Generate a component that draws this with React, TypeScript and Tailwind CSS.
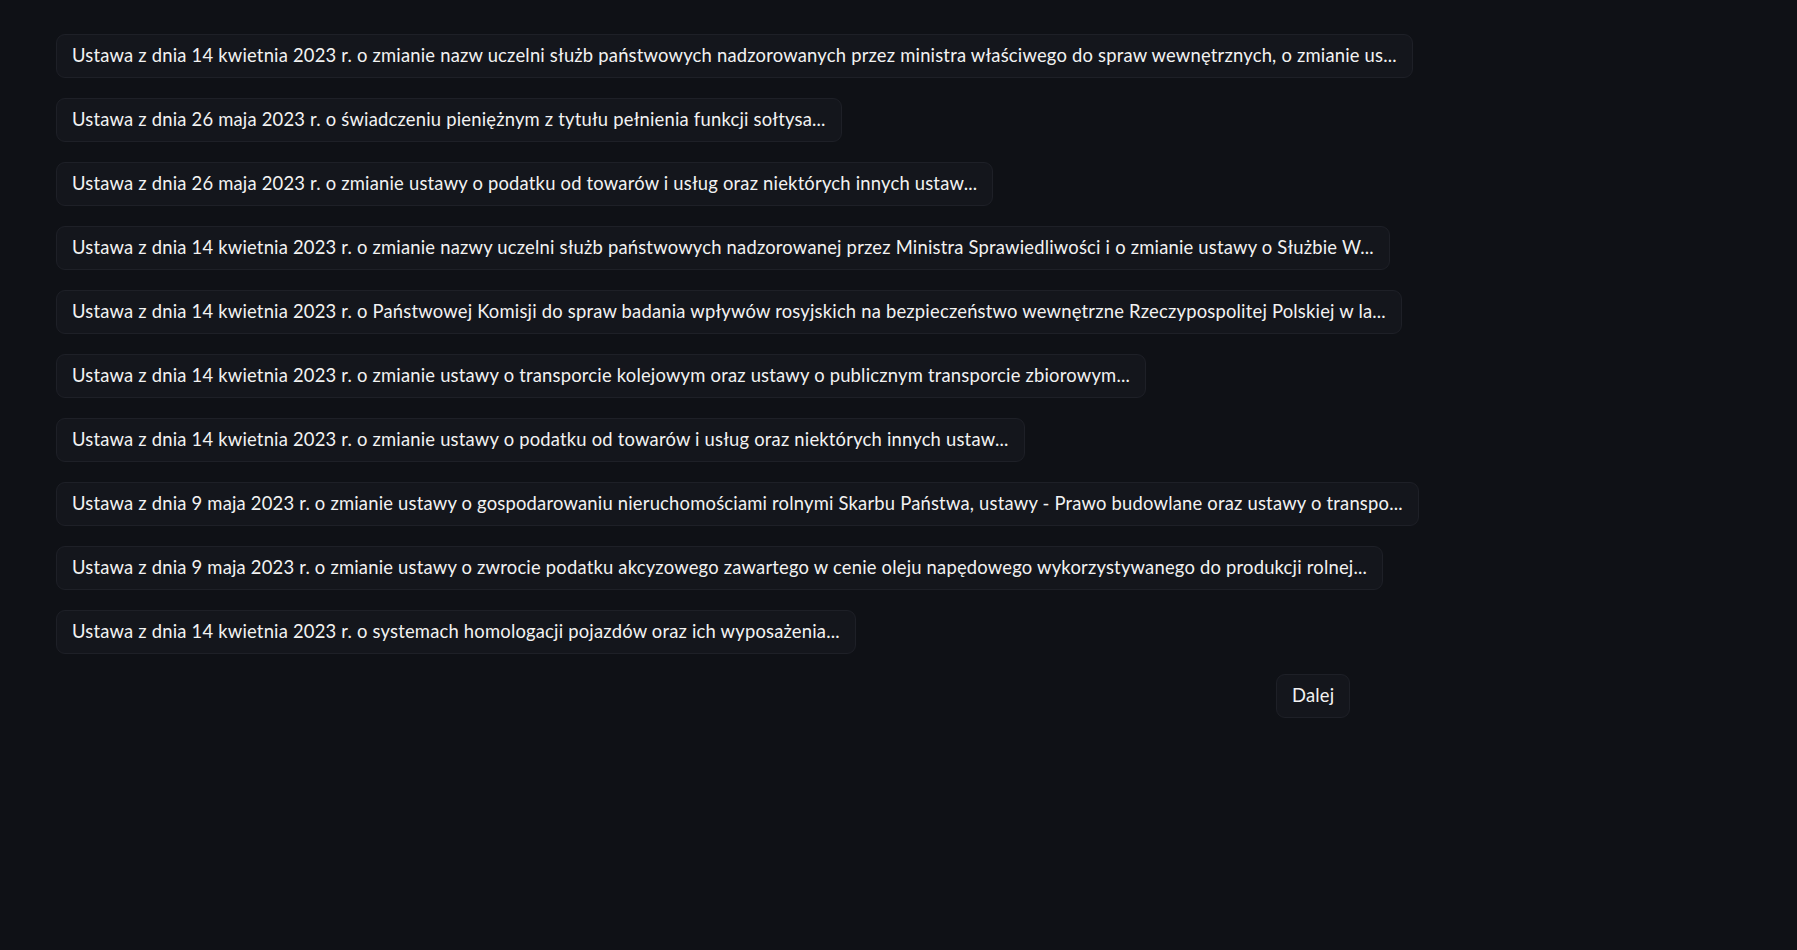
const items = [
  "Ustawa z dnia 14 kwietnia 2023 r. o zmianie nazw uczelni służb państwowych nadzorowanych przez ministra właściwego do spraw wewnętrznych, o zmianie us...",
  "Ustawa z dnia 26 maja 2023 r. o świadczeniu pieniężnym z tytułu pełnienia funkcji sołtysa...",
  "Ustawa z dnia 26 maja 2023 r. o zmianie ustawy o podatku od towarów i usług oraz niektórych innych ustaw...",
  "Ustawa z dnia 14 kwietnia 2023 r. o zmianie nazwy uczelni służb państwowych nadzorowanej przez Ministra Sprawiedliwości i o zmianie ustawy o Służbie W...",
  "Ustawa z dnia 14 kwietnia 2023 r. o Państwowej Komisji do spraw badania wpływów rosyjskich na bezpieczeństwo wewnętrzne Rzeczypospolitej Polskiej w la...",
  "Ustawa z dnia 14 kwietnia 2023 r. o zmianie ustawy o transporcie kolejowym oraz ustawy o publicznym transporcie zbiorowym...",
  "Ustawa z dnia 14 kwietnia 2023 r. o zmianie ustawy o podatku od towarów i usług oraz niektórych innych ustaw...",
  "Ustawa z dnia 9 maja 2023 r. o zmianie ustawy o gospodarowaniu nieruchomościami rolnymi Skarbu Państwa, ustawy - Prawo budowlane oraz ustawy o transpo...",
  "Ustawa z dnia 9 maja 2023 r. o zmianie ustawy o zwrocie podatku akcyzowego zawartego w cenie oleju napędowego wykorzystywanego do produkcji rolnej...",
  "Ustawa z dnia 14 kwietnia 2023 r. o systemach homologacji pojazdów oraz ich wyposażenia...",
];

const Btn = ({ label }: { label: string }) => (
  <button className="h-[44px] whitespace-nowrap rounded-[9px] border border-[#1e2027] bg-[#14161c] px-[15px] text-[18.4px] tracking-[0.2px] text-[#f2f2f2]">
    {label}
  </button>
);

export default function App() {
  return (
    <div
      className="min-h-screen bg-[#0f1116] pl-[56px] pt-[34px]"
      style={{ fontFamily: "Lato, 'Noto Sans', sans-serif" }}
    >
      <div className="flex flex-col items-start gap-[20px]">
        {items.map((label, index) => (
          <Btn key={index} label={label} />
        ))}
        <div className="ml-[1220px]">
          <Btn label="Dalej" />
        </div>
      </div>
    </div>
  );
}
